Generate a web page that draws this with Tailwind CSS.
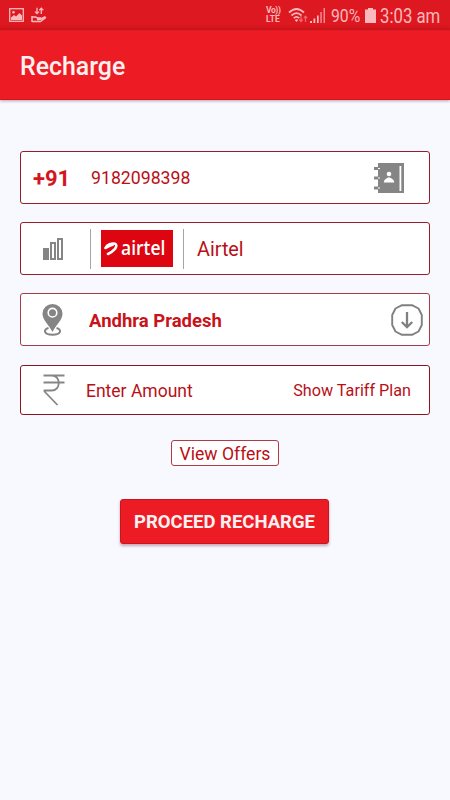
<!DOCTYPE html>
<html lang="en">
<head>
  <meta charset="UTF-8" />
  <meta name="viewport" content="width=device-width, initial-scale=1.0" />
  <title>Recharge</title>

  <script src="https://cdn.jsdelivr.net/npm/@tailwindcss/browser@4"></script>
</head>
<body class="bg-[#f8f9ff] font-[Roboto,sans-serif] text-[#b90f17] min-h-screen overflow-hidden">

  <!-- Status bar -->
  <div class="h-[30px] bg-linear-to-b from-[#de1820] from-80% to-[#cf151c] flex items-center text-[#f9b9bd] pl-[9px] pr-[10px]">
    <svg class="w-[15px] h-[14px]" viewBox="0 0 15 14" fill="none">
      <rect x=".7" y=".7" width="13.6" height="12.6" stroke="currentColor" stroke-width="1.3" />
      <circle cx="4.5" cy="4.3" r="1.3" fill="currentColor" />
      <path d="M2 12V9.5L5 7l2 1.6L10.5 5 13 7.5V12z" fill="currentColor" />
    </svg>
    <svg class="w-4 h-4 ml-[7px]" viewBox="0 0 16 16" fill="none" stroke="currentColor" stroke-width="1.3">
      <path d="M6 .8v5.7M4 4.6l2 2 2-2M10.3 7V1.3M8.3 3.2l2-2 2 2" />
      <path d="M1 9v6M1 10h3.5l2 1h3q1 1.500-1 1.500H6M10 12l3.500-2q1.500 0 .7 1L9.500 14.500H1" stroke-width="1.5" />
    </svg>
    <div class="ml-auto flex items-center">
      <div class="flex flex-col w-[17px] text-[8.5px] font-bold whitespace-nowrap">
        <div class="h-[9px] leading-[9px] tracking-[-0.4px]">Vo))</div>
        <div class="h-[9px] leading-[9px]">LTE</div>
      </div>
      <svg class="w-[21px] h-[17px] ml-[5px]" viewBox="0 0 21 16" preserveAspectRatio="none" fill="none">
        <path d="M1 5.2Q8.5-1.5 16 5.200M3.500 8Q8.500 3.500 13.500 8M5.800 10.500Q8.500 8 11.200 10.500" stroke="currentColor" stroke-width="1.7" />
        <path d="M6.800 12.300Q8.500 10.800 10.200 12.300L8.500 14z" fill="currentColor" />
        <path d="M13 8.500v5M11.300 11.800l1.700 1.900 1.700-1.900M17.500 14V9M15.800 10.500l1.700-1.900 1.700 1.900" stroke="#ee6a70" stroke-width="1.2" />
      </svg>
      <svg class="w-[16px] h-[15px] ml-[1px]" viewBox="0 0 16 15" fill="currentColor">
        <rect x="0" y="13" width="2" height="2" />
        <rect x="3.5" y="10.5" width="1.8" height="4.5" />
        <rect x="7" y="7.5" width="1.7" height="7.5" />
        <rect x="10.3" y="4" width="1.5" height="11" fill-opacity=".7" />
        <rect x="13.5" y="0" width="1.5" height="15" fill-opacity=".7" />
      </svg>
      <span class="text-[19px] leading-[30px] ml-[5px] w-[31px] whitespace-nowrap origin-left scale-x-[.83] mt-px">90%</span>
      <svg class="w-[11px] h-[15px] ml-[3px]" viewBox="0 0 11 15" fill="currentColor">
        <path d="M3 0h5v1.500h3V15H0V1.500h3z" />
      </svg>
      <span class="text-[19.5px] leading-[30px] ml-[4px] w-[60px] whitespace-nowrap origin-left scale-x-[.86] mt-[3px]">3:03 am</span>
    </div>
  </div>

  <!-- App bar -->
  <header class="h-[70px] bg-[#ed1c24] flex items-center px-5 border-t border-t-[#e01b23] border-b border-b-[#d3161e] shadow-[0_1px_3px_rgba(90,20,40,0.4)]">
    <h1 class="text-[24.9px] font-medium text-[#fff0f1] mt-[3px]">Recharge</h1>
  </header>

  <main class="px-5 pt-[51px] flex flex-col">

    <!-- Phone number -->
    <div class="h-[53px] bg-white border border-[#981c29] rounded-[3px] flex items-center pl-3 pr-6">
      <span class="w-[58px] pt-[2px] text-[22px] font-bold text-[#d5151d]">+91</span>
      <span class="pt-[2px] text-[17.7px]">9182098398</span>
      <svg class="w-[31px] h-[30px] ml-auto" viewBox="0 0 31 30">
        <path d="M4 0h26v30H4v-3.500H0v-3h4V16.500H0v-3h4V7H0V4h4z" fill="#858585" />
        <path d="M4 5.500h2M4 15h2M4 25h2" stroke="#fff" />
        <rect x="25.5" y="3" width="1.8" height="25" fill="#fff" />
        <circle cx="15" cy="11" r="2.3" fill="#fff" />
        <path d="M9.800 19.500q0-3.500 5.200-5.200 5.200 1.700 5.200 5.200z" fill="#fff" />
      </svg>
    </div>

    <!-- Operator -->
    <div class="h-[53px] mt-[18px] bg-white border border-[#981c29] rounded-[3px] flex items-center">
      <svg class="w-[21px] h-[22px] ml-[22px]" viewBox="0 0 21 22" fill="#858585">
        <rect x="0" y="10" width="6" height="12" />
        <path fill-rule="evenodd" d="M7 4h6v18H7zM9 6v14h2V6z" />
        <path fill-rule="evenodd" d="M14 0h6v22h-6zM16 2v18h2V2z" />
      </svg>
      <div class="w-px h-10 bg-[#a5a5a5] ml-[26px]"></div>
      <div class="w-[72px] h-[37px] ml-[10px] bg-[#dc0510] flex items-center text-white">
        <svg class="w-[14px] h-[14px] ml-[3px] shrink-0" viewBox="0 0 14 14" fill="none" stroke="currentColor" stroke-linecap="round">
          <path d="M1.500 6C3 2.800 8 .8 11 1.700c2 .8 1.500 3.300 0 5.200C9 9.200 7 10.600 4 12" stroke-width="2.6" />
          <path d="M1.700 6C4 5.500 6 3.500 9 3" stroke-width="1.8" />
        </svg>
        <span class="ml-[3px] font-['Open_Sans',sans-serif] text-[19px] font-semibold leading-none origin-left scale-x-[.92]">airtel</span>
      </div>
      <div class="w-px h-10 bg-[#a5a5a5] ml-[10px]"></div>
      <span class="ml-[13px] pt-[2px] text-[19.8px]">Airtel</span>
    </div>

    <!-- Circle -->
    <div class="h-[53px] mt-[18px] bg-white border border-[#a53b49] rounded-[3px] flex items-center pl-[21px] pr-[6px]">
      <svg class="w-[21px] h-8" viewBox="0 0 21 32" fill="none">
        <path d="M6.500 24C1 25.500 1.500 30.800 10.500 30.800S20 25.500 14.500 24" stroke="#858585" stroke-width="2" />
        <path d="M10.500 28C7 21 .5 16 .5 9.800a10 9.800 0 0 1 20 0C20.500 16 14 21 10.500 28z" fill="#858585" />
        <circle cx="10.5" cy="8.7" r="4.3" stroke="#fff" stroke-width="1.6" />
      </svg>
      <span class="ml-[26px] pt-[4px] text-[18.5px] font-bold text-[#c9131b]">Andhra Pradesh</span>
      <svg class="w-8 h-8 ml-auto" viewBox="0 0 32 32" fill="none" stroke="#808080">
        <path d="M11 1.200h10L27.500 4.500 30.800 11v10l-3.300 6.500L21 30.800H11L4.500 27.500 1.200 21V11L4.500 4.500z" stroke-width="1.9" stroke-linejoin="round" />
        <path d="M16 8v15M10.800 18l5.200 5.200 5.200-5.200" stroke-width="2.3" />
      </svg>
    </div>

    <!-- Amount -->
    <div class="h-[50px] mt-[19px] bg-white border border-[#8f1420] rounded-[3px] flex items-center pl-[22px] pr-[18px]">
      <svg class="w-[22px] h-8" viewBox="0 0 22 32" fill="none" stroke="#858585" stroke-width="1.8">
        <path d="M.5 1.500H21.500M.5 8.500H21.500M.5 1.500H9C18 1.500 18 16.500 9 16.500H1.500V17.500L14.500 31" />
      </svg>
      <span class="ml-[21px] pt-[2px] text-[17.5px]">Enter Amount</span>
      <span class="ml-auto pt-[2px] text-[16.2px]">Show Tariff Plan</span>
    </div>

    <button class="self-center w-[108px] h-[26px] mt-[25px] pt-[3px] bg-white border border-[#b03a46] rounded-[3px] text-[17.6px] leading-none whitespace-nowrap">View Offers</button>

    <button class="w-[209px] h-[45px] mt-[33px] ml-[100px] pt-[2px] bg-[#ed1c24] border border-[#c9151d] rounded-[3px] shadow-[0_2px_3px_rgba(90,20,40,0.35)] text-[18.5px] font-bold text-[#fff0f1] whitespace-nowrap">PROCEED RECHARGE</button>
  </main>

</body>
</html>
